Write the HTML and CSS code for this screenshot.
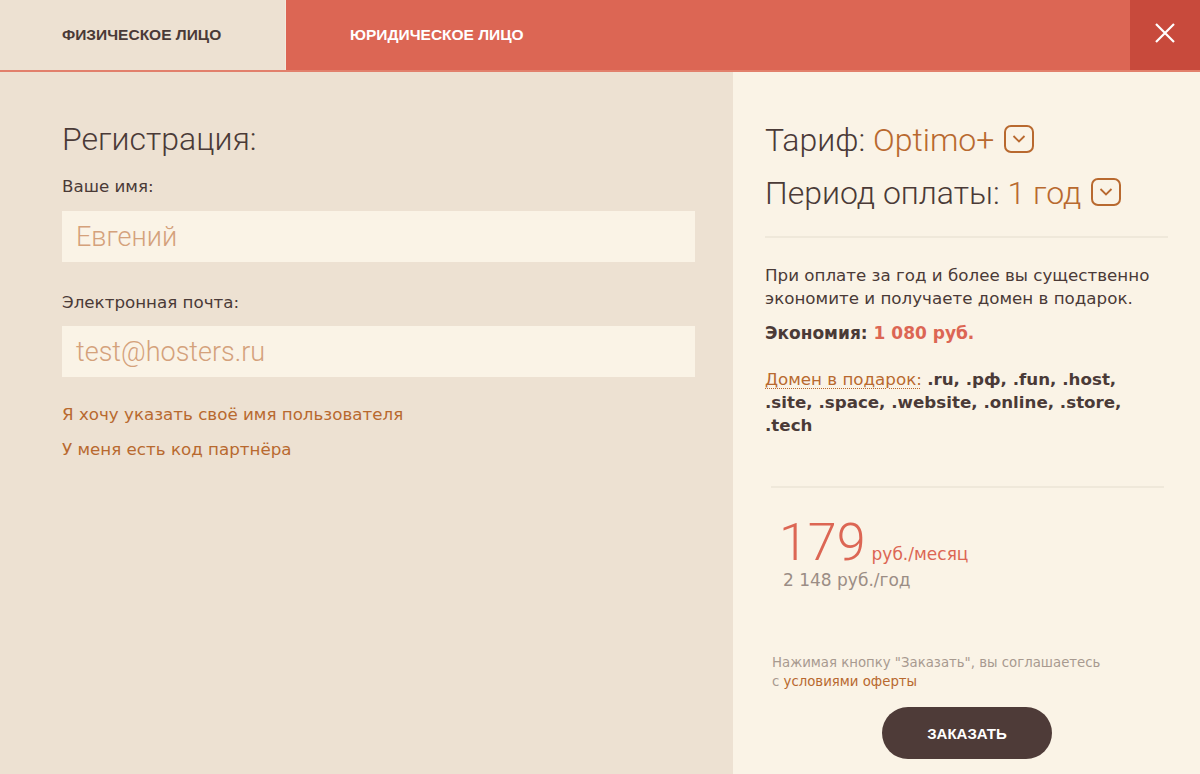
FILE: index.html
```html
<!DOCTYPE html>
<html lang="ru">
<head>
<meta charset="utf-8">
<title>Регистрация</title>
<link rel="stylesheet" href="styles.css">
</head>
<body>
<div class="page">
  <div class="tabs">
    <div class="tab tab-active">ФИЗИЧЕСКОЕ ЛИЦО</div>
    <div class="tab tab-other">ЮРИДИЧЕСКОЕ ЛИЦО</div>
    <div class="close">
      <svg width="20" height="20" viewBox="0 0 20 20"><path d="M1 1 L19 19 M19 1 L1 19" stroke="#fff" stroke-width="2.2" fill="none"/></svg>
    </div>
  </div>
  <div class="main">
    <div class="left">
      <h1 class="title">Регистрация:</h1>
      <div class="label">Ваше имя:</div>
      <div class="input">Евгений</div>
      <div class="label label-mail">Электронная почта:</div>
      <div class="input">test@hosters.ru</div>
      <a class="link link-first">Я хочу указать своё имя пользователя</a>
      <a class="link">У меня есть код партнёра</a>
    </div>
    <div class="right">
      <div class="sel">Тариф:&nbsp;<span class="val">Optimo+</span><span class="chev"><svg width="30" height="28" viewBox="0 0 30 28"><rect x="1" y="1" width="28" height="26" rx="6" ry="6" fill="none" stroke="#b8692f" stroke-width="2"/><path d="M9.5 11 L15 16.5 L20.5 11" fill="none" stroke="#b8692f" stroke-width="1.8"/></svg></span></div>
      <div class="sel">Период оплаты:&nbsp;<span class="val">1 год</span><span class="chev"><svg width="30" height="28" viewBox="0 0 30 28"><rect x="1" y="1" width="28" height="26" rx="6" ry="6" fill="none" stroke="#b8692f" stroke-width="2"/><path d="M9.5 11 L15 16.5 L20.5 11" fill="none" stroke="#b8692f" stroke-width="1.8"/></svg></span></div>
      <div class="divider"></div>
      <p class="info">При оплате за год и более вы существенно экономите и получаете домен в подарок.</p>
      <p class="save">Экономия: <span class="red">1 080 руб.</span></p>
      <p class="domains"><span class="dotted">Домен в подарок:</span> <b>.ru, .рф, .fun, .host, .site, .space, .website, .online, .store, .tech</b></p>
      <div class="divider divider-2"></div>
      <div class="price">
        <div class="price-row"><span class="big">179</span><span class="per">руб./месяц</span></div>
        <div class="year">2 148 руб./год</div>
      </div>
      <p class="terms">Нажимая кнопку "Заказать", вы соглашаетесь<br>с <a class="terms-link">условиями оферты</a></p>
      <div class="btn-wrap"><button class="btn">ЗАКАЗАТЬ</button></div>
    </div>
  </div>
</div>
</body>
</html>
```
FILE: styles.css
```css
* { box-sizing: border-box; }
html, body { margin: 0; padding: 0; }
body {
  width: 1200px;
  height: 774px;
  overflow: hidden;
  background: #faf3e6;
  font-family: "DejaVu Sans", sans-serif;
  color: #4a3a37;
}
.page { display: flex; flex-direction: column; height: 774px; }
.tabs {
  display: flex;
  height: 72px;
  border-bottom: 2px solid #e2806c;
  background: #dc6654;
}
.tab {
  display: flex;
  align-items: center;
  font-family: "Liberation Sans", Arial, sans-serif;
  font-weight: bold;
  font-size: 15.5px;
  padding-bottom: 1px;
}
.tab-active {
  width: 286px;
  background: #ede1d2;
  color: #4a3a37;
  padding-left: 62px;
  border-right: 1px solid #f3e8dc;
}
.tab-other {
  flex: 1;
  color: #fff;
  padding-left: 64px;
}
.close {
  width: 70px;
  background: #c84a3c;
  display: flex;
  align-items: center;
  justify-content: center;
  padding-bottom: 4px;
}
.main { display: flex; flex: 1; }
.left {
  width: 733px;
  background: #ede1d2;
  padding: 49px 38px 0 62px;
  display: flex;
  flex-direction: column;
  align-items: flex-start;
}
.title {
  margin: 0;
  font-family: Roboto, "Liberation Sans", sans-serif;
  font-weight: 300;
  font-size: 32px;
  line-height: 36px;
  color: #4a3a37;
}
.label {
  margin-top: 19px;
  font-size: 16.7px;
  line-height: 20px;
  color: #4a3a37;
}
.label-mail { margin-top: 30px; }
.input {
  margin-top: 15px;
  width: 633px;
  height: 51px;
  background: #faf3e6;
  padding-left: 14px;
  display: flex;
  align-items: center;
  font-family: Roboto, "Liberation Sans", sans-serif;
  font-weight: 300;
  font-size: 27px;
  color: #d4a17b;
}
.label-mail + .input { margin-top: 14px; }
.link {
  font-size: 16.7px;
  line-height: 22px;
  color: #b8692f;
  margin-top: 13px;
}
.link-first { margin-top: 26px; }
.right {
  flex: 1;
  padding: 48px 32px 0 32px;
  display: flex;
  flex-direction: column;
}
.sel {
  font-family: Roboto, "Liberation Sans", sans-serif;
  font-weight: 300;
  font-size: 32px;
  line-height: 40px;
  color: #4a3a37;
  display: flex;
  align-items: center;
  white-space: nowrap;
}
.sel + .sel { margin-top: 13px; }
.val { color: #b8692f; }
.chev { display: flex; margin-left: 10px; margin-top: -2px; }
.divider {
  margin-top: 23px;
  height: 2px;
  background: #efe8da;
  width: 403px;
}
.info {
  margin: 26px 0 0 0;
  font-size: 16.7px;
  line-height: 23px;
  color: #4a3a37;
}
.save {
  margin: 12px 0 0 0;
  font-size: 17px;
  line-height: 23px;
  font-weight: bold;
}
.red { color: #dc6654; }
.domains {
  margin: 23px 0 0 0;
  font-size: 16.7px;
  line-height: 23px;
  width: 380px;
}
.dotted {
  color: #b8692f;
  text-decoration: underline dotted #b8692f;
  text-decoration-thickness: 1px;
  text-underline-offset: 3px;
}
.divider-2 { margin-top: 49px; margin-left: 6px; width: 393px; }
.price { padding-left: 14px; margin-top: 27px; }
.price-row { display: flex; align-items: baseline; }
.big {
  font-family: Roboto, "Liberation Sans", sans-serif;
  font-weight: 300;
  font-size: 52px;
  line-height: 56px;
  color: #dc6654;
}
.per { font-size: 17px; color: #dc6654; margin-left: 6px; }
.year { font-size: 17px; line-height: 20px; color: #9b8d85; margin-top: -1px; padding-left: 4px; }
.terms {
  margin: 63px 0 0 7px;
  font-size: 13.3px;
  line-height: 19px;
  color: #a89a90;
}
.terms-link { color: #b8692f; }
.btn-wrap { display: flex; padding-left: 117px; margin-top: 16px; }
.btn {
  width: 170px;
  height: 52px;
  border: none;
  border-radius: 26px;
  background: #4e3b38;
  color: #fff;
  font-family: "Liberation Sans", Arial, sans-serif;
  font-weight: bold;
  font-size: 15px;
}
```
